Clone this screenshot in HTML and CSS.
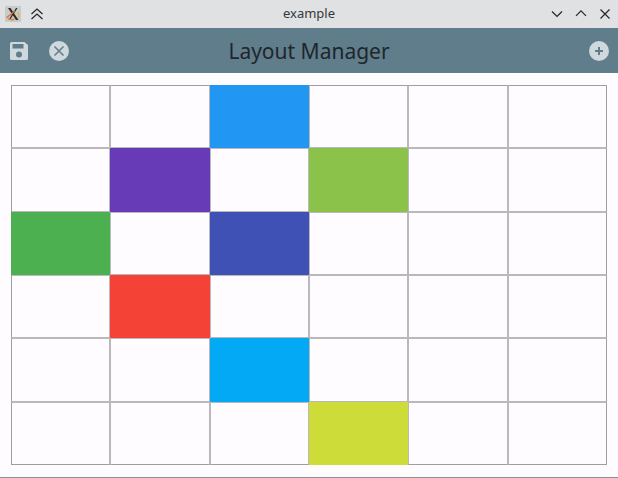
FILE: index.html
```html
<!DOCTYPE html>
<html lang="en">
<head>
<meta charset="utf-8">
<title>example</title>
<link rel="stylesheet" href="styles.css">
</head>
<body>
<div class="window">
  <div class="titlebar">
    <div class="tb-left">
      <span class="appicon">
        <svg width="16" height="16" viewBox="0 0 16 16">
          <path d="M3 2h2.500l8 12H11zM11 2h1.500L5 14H3.500z" fill="#2b2b2b"/>
          <path d="M1.500 11.500Q6 9 10 4.500" fill="none" stroke="#d9702e" stroke-width="1.300"/>
          <path d="M2.500 12Q6 15 9.500 13" fill="none" stroke="#e28a3c" stroke-width="1.500"/>
          <path d="M12.500 6.500Q15 9 13 12" fill="none" stroke="#e8b04a" stroke-width="1.300"/>
        </svg>
      </span>
      <svg class="tb-btn" width="14" height="14" viewBox="0 0 14 14"><path d="M1.500 7 7 2l5.500 5M1.500 12 7 7l5.500 5" fill="none" stroke="#232629" stroke-width="1.200"/></svg>
    </div>
    <div class="tb-title">example</div>
    <div class="tb-right">
      <svg width="14" height="14" viewBox="0 0 14 14"><path d="M2 4.500 7 9.500l5-5" fill="none" stroke="#232629" stroke-width="1.200"/></svg>
      <svg width="14" height="14" viewBox="0 0 14 14"><path d="M2 8.800 7 3.800l5 5" fill="none" stroke="#232629" stroke-width="1.200"/></svg>
      <svg width="14" height="14" viewBox="0 0 14 14"><path d="M2.500 2.500l9 9M11.500 2.500l-9 9" fill="none" stroke="#232629" stroke-width="1.200"/></svg>
    </div>
  </div>
  <div class="header">
    <div class="h-left">
      <svg width="18" height="18" viewBox="0 0 18 18"><path d="M0 1.500A1.500 1.500 0 0 1 1.500 0h13L18 3v13.500a1.500 1.500 0 0 1-1.500 1.500h-15A1.500 1.500 0 0 1 0 16.500z" fill="#cfd8dc"/><rect x="2.500" y="2" width="11" height="4.500" fill="#607d8b"/><circle cx="9" cy="12.500" r="3" fill="#607d8b"/></svg>
      <svg width="20" height="20" viewBox="0 0 20 20"><circle cx="10" cy="10" r="10" fill="#cfd8dc"/><path d="M5.500 5.500l9 9M14.500 5.500l-9 9" stroke="#607d8b" stroke-width="1.500"/></svg>
    </div>
    <div class="h-title">Layout Manager</div>
    <svg width="20" height="20" viewBox="0 0 20 20"><circle cx="10" cy="10" r="10" fill="#cfd8dc"/><path d="M10 6v8M6 10h8" stroke="#607d8b" stroke-width="2"/></svg>
  </div>
  <div class="content">
    <div class="grid">
      <div class="cell"></div><div class="cell"></div><div class="cell blue"></div><div class="cell"></div><div class="cell"></div><div class="cell"></div>
      <div class="cell"></div><div class="cell purple"></div><div class="cell"></div><div class="cell lime"></div><div class="cell"></div><div class="cell"></div>
      <div class="cell green"></div><div class="cell"></div><div class="cell indigo"></div><div class="cell"></div><div class="cell"></div><div class="cell"></div>
      <div class="cell"></div><div class="cell red"></div><div class="cell"></div><div class="cell"></div><div class="cell"></div><div class="cell"></div>
      <div class="cell"></div><div class="cell"></div><div class="cell sky"></div><div class="cell"></div><div class="cell"></div><div class="cell"></div>
      <div class="cell"></div><div class="cell"></div><div class="cell"></div><div class="cell yellow"></div><div class="cell"></div><div class="cell"></div>
    </div>
  </div>
</div>
</body>
</html>
```
FILE: styles.css
```css
html, body {
  margin: 0;
  padding: 0;
  background: #fffcff;
}
.window {
  width: 618px;
  height: 478px;
  display: flex;
  flex-direction: column;
  border-bottom: 1px solid #8f8f8f;
  box-sizing: border-box;
  overflow: hidden;
}
.titlebar {
  height: 28px;
  flex: none;
  background: #dfe1e2;
  display: flex;
  align-items: center;
  justify-content: space-between;
  padding: 0 6px 0 5px;
  position: relative;
}
.tb-left {
  display: flex;
  align-items: center;
  gap: 9px;
}
.appicon {
  width: 16px;
  height: 16px;
  background: #c8cbcc;
  display: block;
}
.appicon svg { display: block; }
.tb-title {
  position: absolute;
  left: 0;
  right: 0;
  text-align: center;
  font: 13px "Noto Sans", sans-serif;
  color: #35393c;
  padding-bottom: 2px;
}
.tb-right {
  display: flex;
  gap: 10px;
  position: relative;
}
.header {
  height: 45px;
  flex: none;
  background: #607d8b;
  display: flex;
  align-items: center;
  justify-content: space-between;
  padding: 0 9px 0 10px;
  position: relative;
}
.h-left {
  display: flex;
  align-items: center;
  gap: 21px;
}
.h-title {
  position: absolute;
  left: 0;
  right: 0;
  text-align: center;
  font: 21px "Noto Sans", sans-serif;
  color: #1e262b;
}
.header svg { position: relative; }
.content {
  flex: 1;
  padding: 12px 11px 12px;
}
.grid {
  display: grid;
  grid-template-columns: repeat(6, 1fr);
  grid-template-rows: repeat(6, 1fr);
  height: 380px;
}
.cell {
  border: 1px solid #bab8ba;
  background: #fffcff;
}
.cell:nth-child(-n+6) { border-top-color: #a09da0; }
.cell:nth-last-child(-n+6) { border-bottom-color: #a09da0; }
.cell:nth-child(6n+1) { border-left-color: #a09da0; }
.cell:nth-child(6n) { border-right-color: #a09da0; }
.cell.blue { background: #2196f3; border-color: transparent; }
.cell.purple { background: #673ab7; border-color: transparent; }
.cell.lime { background: #8bc34a; border-color: transparent; }
.cell.green { background: #4caf50; border-color: transparent; }
.cell.indigo { background: #3f51b5; border-color: transparent; }
.cell.red { background: #f44336; border-color: transparent; }
.cell.sky { background: #03a9f4; border-color: transparent; }
.cell.yellow { background: #cddc39; border-color: transparent; }
```
